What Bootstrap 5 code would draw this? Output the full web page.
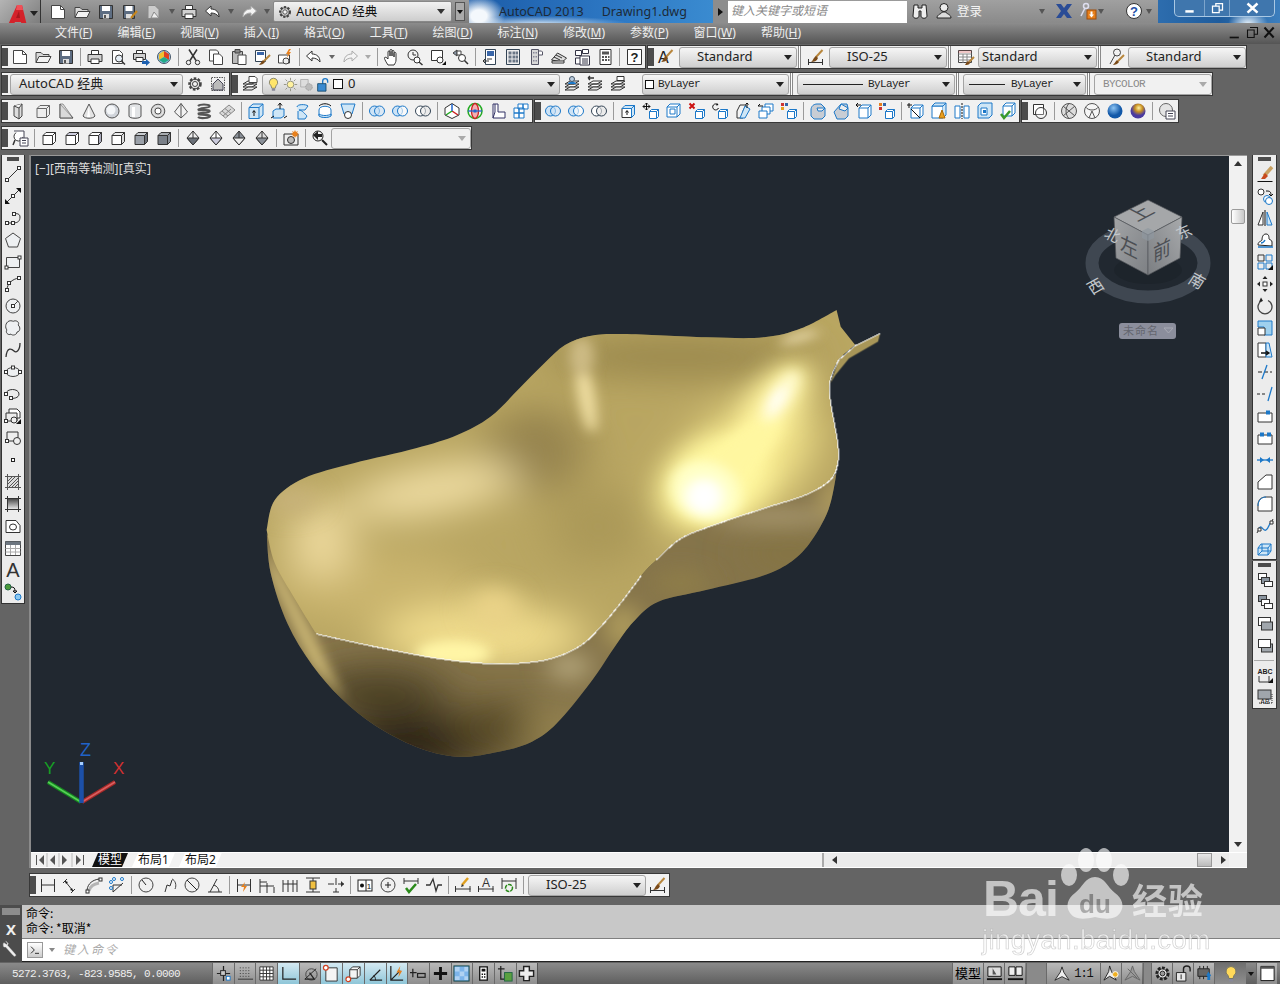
<!DOCTYPE html>
<html lang="zh">
<head>
<meta charset="UTF-8">
<title>AutoCAD 2013 Drawing1.dwg</title>
<link href="https://cdn.jsdelivr.net/npm/bootstrap@5.3.0/dist/css/bootstrap.min.css" rel="stylesheet">
<style>
  html, body { margin: 0; height: 100%; background: #646464; }
  #acad { width: 1280px; height: 984px; overflow: hidden; background: #646464; color: #111;
    font: 12px/1.2 "Noto Sans", "Noto Sans CJK SC", sans-serif; }
  .ico { display: block; overflow: visible; }
  /* title bar */
  .titlebar { height: 23px; background: linear-gradient(#9b9b9b, #7d7d7d); padding-left: 46px; }
  .titlebar > * { flex: none; }
  .tcell { width: 24px; height: 23px; }
  .tarrow { width: 12px; height: 23px; }
  .tarrow.nar { width: 11px; }
  .tarrow::after, .cmb::after, .menuarrow::after { content: ""; border: 4px solid transparent; border-top: 5px solid #222; border-bottom: 0; }
  .tarrow.dim::after { border-top-color: #555; border-left-width: 3px; border-right-width: 3px; }
  .tcombo { width: 179px; height: 21px; margin: 0 3px 0 0; background: linear-gradient(#f2f2f2, #cdcdcd); border: 1px solid #888; border-radius: 2px; padding: 0 6px 0 3px; font-size: 12.5px; }
  .tcombo::after { content: ""; margin-left: auto; border: 4px solid transparent; border-top: 5px solid #333; border-bottom: 0; }
  .tmore { width: 10px; height: 19px; background: #aaa; border: 1px solid #555; margin-right: 4px; }
  .tmore::after { content: ""; border: 3px solid transparent; border-top: 4px solid #111; border-bottom: 0; }
  .aero { width: 244px; height: 23px; color: #1c2a38; font-size: 12.5px; padding-left: 30px; gap: 18px;
    background: radial-gradient(ellipse 26px 20px at 10px 16px, #f4f8fc 30%, transparent 100%), radial-gradient(ellipse 90px 8px at 70px 24px, #cfe2f4, transparent), linear-gradient(90deg, #1c5ca8, #2d78c4 60%, #3a8bd0); }
  .tplay { width: 15px; height: 23px; background: #8d8d8d; }
  .tplay::after { content: ""; border: 4px solid transparent; border-left: 5px solid #111; border-right: 0; }
  .search { width: 179px; height: 22px; background: #fff; color: #888; font-style: italic; padding-left: 3px; }
  .infobar { width: 251px; height: 23px; background: linear-gradient(#a0a0a0, #8a8a8a); color: #f4f4f4; position: relative; }
  .infobar > * { position: absolute; top: 2px; }
  .infobar .inf3 { top: 4px; font-size: 12.5px; }
  .winbg { width: 123px; height: 23px; background: radial-gradient(ellipse 20px 14px at 90px 24px, #e8f2fa, transparent), linear-gradient(90deg, #2d6dae, #1f5c9c 50%, #3d7fbe); padding: 0 6px 6px 16px; }
  .winbtns { width: 101px; height: 17px; border: 1px solid #a9c8e4; border-top: 0; border-radius: 0 0 5px 5px; background: #3f76ad; }
  .winbtns > div { border-right: 1px solid #7da5cc; height: 100%; }
  .w1 { width: 30px; } .w2 { width: 25px; } .w3 { flex: 1; border-right: 0 !important; }
  /* menu */
  .menubar { height: 21px; background: linear-gradient(#8c8c8c, #555); color: #eee; padding-left: 55px; gap: 25px; font-size: 12px; position: relative; }
  .menuctl { position: absolute; right: 3px; top: 2px; gap: 2px; }
  /* app button */
  .appbtn { position: absolute; left: 0; top: 0; width: 41px; height: 41px; background: linear-gradient(135deg, #b4b4b4, #6f6f6f); border: 1px solid #333; border-width: 0 1px 1px 0; }
  .appbtn .menuarrow { position: absolute; left: 30px; top: 18px; }
  /* toolbars */
  .tbrow { margin: 3px 0 0 1px; height: 24px; gap: 1px; }
  .tbrow:first-child { margin-top: 1px; }
  .tbwrap { height: 105px; }
  .tb { height: 24px; border: 1px solid #383838; background: #f1f1f1; }
  .grip { width: 6px; height: 100%; flex: none; margin-right: 0; background-color: #4d4d4d; background-image: radial-gradient(#bbb 35%, transparent 40%); background-size: 2px 2px; background-position: 1px 0; background-clip: content-box; padding: 2px 0; }
  .btnico { width: 23px; height: 22px; flex: none; }
  .drop { width: 13px; height: 22px; flex: none; }
  .drop::after { content: ""; border: 3px solid transparent; border-top: 4px solid #666; border-bottom: 0; }
  .drop.off::after { border-top-color: #aaa; }
  .sepv { width: 6px; height: 20px; flex: none; }
  .sepv::after { content: ""; width: 1px; height: 18px; background: #9a9a9a; }
  .dsep { width: 6px; height: 100%; flex: none; background: linear-gradient(90deg, transparent 1px, #8a8a8a 1px, #8a8a8a 2px, #fff 2px, #fff 3px, #8a8a8a 3px, #8a8a8a 4px, transparent 4px); }
  .cmb { height: 21px; flex: none; background: linear-gradient(#f6f6f6, #cfcfcf); border: 1px solid #a4a4a4; border-radius: 3px; padding: 0 6px 0 8px; position: relative; font-size: 13px; white-space: nowrap; color: #222; }
  .cmb::after { position: absolute; right: 4px; top: 7px; }
  .cmb.pad18 { padding-left: 17px; }
  .cmb.left { padding-left: 3px; }
  .cmb.left svg { margin-right: 1.5px; }
  .cmb.off { background: #f1f1f1; color: #8a8a8a; }
  .cmb.off::after { border-top-color: #aaa; }
  .cmb .slab { font: 11px "Liberation Mono", monospace; letter-spacing: -0.6px; }
  .cmb .lineline { width: 60px; height: 1px; background: #222; margin: 0 5px 0 -3px; }
  .cmb .lineshort { width: 36px; height: 1px; background: #222; margin: 0 6px 0 -3px; }
  .cmb .swatch { width: 9px; height: 9px; border: 1px solid #111; background: #fff; margin: 0 4px 0 -1px; }
  .cmb .swatchb { width: 10px; height: 10px; border: 1.5px solid #111; background: #fff; margin: 0 5px 0 1px; }
  /* middle area */
  .midarea { height: 713px; margin-top: 5px; }
  .leftcol { padding-left: 1px; border-right: 2px solid #8a8a8a; width: 31px; }
  .vtb { width: 24px; background: #ececec; border: 1px solid #333; border-top: 0; }
  .vgrip { height: 8px; background-color: #4d4d4d; background-image: radial-gradient(#bbb 35%, transparent 40%); background-size: 2px 2px; background-clip: content-box; padding: 2px 5px; }
  .vtb .btnico { width: 22px; height: 22px; }
  .vsep { height: 1px; width: 20px; background: #aaa; margin: 3px 1px; }
  .centercol { width: 1216px; }
  .canvasrow { height: 697px; border-top: 1px solid #999; }
  .canvasbox { width: 1198px; background: #212830; position: relative; overflow: hidden; }
  .vscroll { width: 18px; background: #f1f1f1; position: relative; }
  .sarrow-up, .sarrow-down { position: absolute; left: 5px; border: 4px solid transparent; }
  .sarrow-up { top: 5px; border-bottom: 5px solid #333; border-top: 0; }
  .sarrow-down { bottom: 5px; border-top: 5px solid #333; border-bottom: 0; }
  .vthumb { position: absolute; left: 2px; top: 53px; width: 14px; height: 15px; background: linear-gradient(90deg, #fff, #c8c8c8); border: 1px solid #9a9a9a; border-radius: 2px; }
  .viewlabel { position: absolute; left: 4px; top: 6px; color: #ddd; font-size: 12px; letter-spacing: .1px; }
  .surface { position: absolute; left: 219px; top: 144px; width: 650px; height: 470px; }
  .cubebox { position: absolute; left: 1029px; top: 4px; width: 180px; height: 190px; }
  .ucs { position: absolute; left: 0; top: 584px; width: 110px; height: 70px; }
  .tabstrip { height: 16px; background: #f1f1f1; border-top: 1px solid #fff; border-bottom: 1px solid #fff; width: 1216px; position: relative; font-size: 12px; }
  .navbtns { width: 60px; margin-left: 1px; height: 100%; flex: none; }
  .navbtns svg { display: block; }
  .sheet { height: 100%; padding: 0 6px; margin-right: 4px; color: #111; clip-path: polygon(6px 0, 100% 0, calc(100% - 6px) 100%, 0 100%); background: #fff; line-height: 1; }
  .sheet.on { background: #111; color: #fff; }
  .hscroll { position: absolute; left: 791px; top: 0; width: 407px; height: 100%; background: #ebebeb; border-left: 2px solid #aaa; }
  .harrow-l, .harrow-r { position: absolute; top: 3px; border: 4px solid transparent; }
  .harrow-l { left: 8px; border-right: 5px solid #333; border-left: 0; }
  .harrow-r { right: 3px; border-left: 5px solid #333; border-right: 0; }
  .hthumb { position: absolute; left: 373px; top: 0; width: 15px; height: 14px; background: linear-gradient(#e8e8e8, #bbb); border: 1px solid #999; }
  .rightcol { width: 33px; padding-left: 5px; }
  .vtb.rt { width: 25px; }
  .vtb.rt .btnico { width: 23px; }
  .vtb.rt + .vtb.rt { margin-top: 1px; }
  /* dimension toolbar */
  .dimrow { margin: 5px 0 0 29px; }
  /* command window */
  .cmdwin { margin-top: 8px; height: 57px; }
  .cmdside { width: 22px; background: #4c4c4c; position: relative; }
  .cmdgrip { height: 13px; background-color: #8c8c8c; background-image: radial-gradient(#ccc 40%, transparent 45%); background-size: 2px 2px; background-clip: content-box; padding: 3px 2px; }
  .cmdx { height: 22px; color: #eee; font-weight: 700; font-size: 15px; }
  .cmdmain { flex: 1; }
  .cmdhist { height: 33px; background: #c8c8c8; padding: 0 0 0 4px; font: 12px/15px "Noto Sans CJK SC", sans-serif; color: #000; }
  .cmdinput { height: 24px; background: #fff; border-top: 1px solid #808080; border-bottom: 1px solid #222; padding-left: 5px; color: #aaa; font-style: italic; }
  .cmdbtn { width: 16px; height: 16px; background: linear-gradient(#fff, #ccc); border: 1px solid #999; color: #333; }
  .hintdrop { width: 17px; height: 10px; }
  .hintdrop::after { content: ""; border: 3px solid transparent; border-top: 4px solid #888; border-bottom: 0; }
  .hint { letter-spacing: 2px; font-size: 12px; margin-left: 3px; }
  /* status bar */
  .statusbar { height: 21px; margin-top: 1px; background: linear-gradient(#8a8a8a, #5f5f5f); position: relative; }
  .coords { width: 212px; padding-left: 12px; font: 11px "Liberation Mono", monospace; letter-spacing: -.6px; color: #eee; flex: none; }
  .stbtn { width: 21.7px; height: 21px; flex: none; background: linear-gradient(#b9b9b9, #8e8e8e); border-left: 1px solid #6a6a6a; }
  .stbtn.act { background: linear-gradient(#d4e9f2, #8fc6d8); }
  .stend { width: 1px; height: 21px; background: #555; }
  .stright { margin-left: auto; margin-right: 3px; height: 21px; }
  .stright .stbtn { width: 21px; }
  .stscale { width: 54px; height: 21px; background: linear-gradient(#b9b9b9, #8e8e8e); border-left: 1px solid #6a6a6a; font: 12px "Liberation Mono", monospace; color: #111; letter-spacing: -1px; }
  .stmodel { width: 31px; height: 21px; background: linear-gradient(#b9b9b9, #8e8e8e); border-left: 1px solid #6a6a6a; font-size: 13px; color: #000; line-height: 1; }
  .stgap { width: 20px; height: 21px; background: #8a8a8a; margin: 0 0 0 1px; border-left: 1px solid #6a6a6a; }
  .stgap.nar { width: 8px; }
  .stbulb { width: 32px !important; background: linear-gradient(#6f6f6f, #8e8e8e); }
  .stdrop { width: 10px; height: 21px; }
  .stdrop::after { content: ""; border: 3px solid transparent; border-top: 4px solid #111; border-bottom: 0; }
  /* watermark */
  .wmark { position: absolute; left: 980px; top: 845px; width: 240px; height: 114px; opacity: .62; color: #fff; pointer-events: none; }
  .wmark .bai { position: absolute; left: 3px; top: 29px; font: 700 50px/1 "Liberation Sans", sans-serif; letter-spacing: -1px; }
  .wmark .jing { position: absolute; left: 152px; top: 36px; font: 700 35px/1 "Noto Sans CJK SC", sans-serif; letter-spacing: 1px; }
  .wmark .paw { position: absolute; left: 80px; top: 2px; }
  .wmark .jyurl { position: absolute; left: 2px; top: 81px; font: 27.5px/1 "Liberation Sans", sans-serif; letter-spacing: .4px; -webkit-text-stroke: .7px #b4b4b4; }
</style>
</head>
<body>
<div id="acad" class="position-relative">

  <div class="titlebar d-flex align-items-center" id="titlebar"></div>
  <div class="appbtn">
    <svg width="32" height="40" viewBox="0 0 32 40">
      <path fill="#d4222a" d="M3 36 17 5h5l6 25-6-2-1-6h-6l-6 12z"/>
      <path fill="#7e0f14" d="M3 36l6 2 6-12-2-1zM22 28l6 2 0 3-6-2z"/>
      <path fill="#f05058" d="M17 5h5l1 5h-7z"/>
      <path fill="#a9161c" d="M16 18l3-7 1 7z"/>
    </svg>
    <span class="menuarrow d-block"></span>
  </div>

  <nav class="menubar d-flex align-items-center" id="menubar"></nav>

  <div class="tbwrap" id="toolbars"></div>

  <div class="midarea d-flex">
    <div class="leftcol"><div class="vtb" id="tbLeft"></div></div>
    <div class="centercol">
      <div class="canvasrow d-flex">
        <div class="canvasbox">
          <div class="viewlabel">[−][西南等轴测][真实]</div>

          <svg class="surface" viewBox="0 0 1568 1410" preserveAspectRatio="none">
            <defs>
              <filter id="wide" filterUnits="userSpaceOnUse" x="-200" y="-200" width="2000" height="1800"><feGaussianBlur stdDeviation="55"/></filter>
              <filter id="soft" filterUnits="userSpaceOnUse" x="-200" y="-200" width="2000" height="1800"><feGaussianBlur stdDeviation="32"/></filter>
              <filter id="mid" filterUnits="userSpaceOnUse" x="-200" y="-200" width="2000" height="1800"><feGaussianBlur stdDeviation="16"/></filter>
              <clipPath id="clipInner"><path id="pInner"/></clipPath>
              <clipPath id="clipShell"><path id="pShell"/></clipPath>
            </defs>
            <g clip-path="url(#clipShell)">
              <rect width="1568" height="1410" fill="#85744a"/>
              <g filter="url(#wide)">
                <ellipse cx="410" cy="1330" rx="190" ry="90" fill="#2c2312"/>
                <ellipse cx="310" cy="1180" rx="170" ry="80" fill="#4e4226"/>
                <ellipse cx="600" cy="1280" rx="120" ry="80" fill="#564a28"/>
                <ellipse cx="1300" cy="760" rx="110" ry="40" fill="#85743f"/>
                <ellipse cx="730" cy="1290" rx="60" ry="60" fill="#a08e55"/>
              </g>
              <g filter="url(#soft)">
                <ellipse cx="770" cy="1100" rx="50" ry="45" fill="#b4a57a"/>
                <ellipse cx="1260" cy="650" rx="150" ry="28" fill="#a99970"/>
                <ellipse cx="1410" cy="590" rx="26" ry="70" fill="#c2ad68"/>
                <ellipse cx="1040" cy="850" rx="70" ry="40" fill="#8f7e4a"/>
                <ellipse cx="900" cy="980" rx="40" ry="70" fill="#b3a05e"/>
              </g>
              <g filter="url(#mid)">
                <path d="M40 730 150 1000 230 1210 150 1095 50 830z" fill="#d2bd78"/>
              </g>
            </g>
            <path id="pInner2" fill="#b9a662"/>
            <g clip-path="url(#clipInner)">
              <g filter="url(#wide)">
                <ellipse cx="1030" cy="170" rx="330" ry="60" fill="#98864c"/>
                <ellipse cx="690" cy="450" rx="120" ry="130" fill="#95834d"/>
                <ellipse cx="840" cy="680" rx="120" ry="120" fill="#ab9959"/>
                <ellipse cx="300" cy="860" rx="250" ry="110" fill="#c9b46d"/>
                <ellipse cx="440" cy="570" rx="210" ry="70" fill="#efdda3" transform="rotate(-14 440 570)"/>
                <ellipse cx="170" cy="720" rx="70" ry="120" fill="#f2dea2"/>
                <ellipse cx="560" cy="1010" rx="250" ry="100" fill="#f0dc8c"/>
                <ellipse cx="1180" cy="500" rx="130" ry="240" fill="#f9eb90" transform="rotate(36 1180 500)"/>
              </g>
              <g filter="url(#soft)">
                <ellipse cx="100" cy="600" rx="60" ry="40" fill="#c8b27c"/>
                <ellipse cx="590" cy="930" rx="60" ry="70" fill="#ead388"/>
                <ellipse cx="1120" cy="540" rx="110" ry="140" fill="#fff8a0" transform="rotate(38 1120 540)"/>
                <ellipse cx="1270" cy="300" rx="60" ry="130" fill="#fff4a0" transform="rotate(28 1270 300)"/>
              </g>
              <g filter="url(#mid)">
                <ellipse cx="810" cy="280" rx="20" ry="120" fill="#f1e0a4" transform="rotate(-8 810 280)"/>
                <ellipse cx="800" cy="170" rx="30" ry="60" fill="#cdbb85"/>
                <ellipse cx="1325" cy="112" rx="50" ry="12" fill="#ebdcae" transform="rotate(-20 1325 112)"/>
                <ellipse cx="1170" cy="480" rx="55" ry="170" fill="#fff7a0" transform="rotate(38 1170 480)"/>
                <ellipse cx="1100" cy="575" rx="80" ry="95" fill="#ffffc8" transform="rotate(-30 1100 575)"/>
                <ellipse cx="1280" cy="290" rx="26" ry="85" fill="#fffbd0" transform="rotate(26 1280 290)"/>
                <ellipse cx="490" cy="1060" rx="90" ry="40" fill="#fff5a6"/>
                <ellipse cx="1095" cy="590" rx="44" ry="52" fill="#ffffff"/>
                <ellipse cx="1270" cy="300" rx="14" ry="42" fill="#ffffff" transform="rotate(26 1270 300)"/>
              </g>
            </g>
            <path id="pFlap" fill="#a89658"/>
            <path id="pRim1" fill="none" stroke="#fff" stroke-width="1" shape-rendering="crispEdges" vector-effect="non-scaling-stroke"/>
            <path id="pRim2" fill="none" stroke="#fff" stroke-width="1" shape-rendering="crispEdges" vector-effect="non-scaling-stroke"/>
          </svg>

          <svg class="cubebox" viewBox="1060 160 180 190">
            <defs>
              <linearGradient id="cubeL" x1="0" x2="1" y1="0" y2="1"><stop offset="0" stop-color="#a2a4a6"/><stop offset="1" stop-color="#7d8084"/></linearGradient>
              <linearGradient id="cubeR" x1="1" x2="0" y1="0" y2="1"><stop offset="0" stop-color="#a8aaac"/><stop offset="1" stop-color="#7b7e82"/></linearGradient>
            </defs>
            <ellipse cx="1148" cy="263" rx="56" ry="34" fill="none" stroke="#3f4751" stroke-width="13"/>
            <ellipse cx="1148" cy="270" rx="34" ry="14" fill="#1a1f26" opacity=".5"/>
            <path fill="#a5a7a9" stroke="#55585c" stroke-width=".7" d="M1148 200l34 17-34 18-34-18z"/>
            <path fill="url(#cubeL)" stroke="#55585c" stroke-width=".7" d="M1114 217l34 18v40l-32-17z"/>
            <path fill="url(#cubeR)" stroke="#55585c" stroke-width=".7" d="M1182 217l-34 18v40l32-17z"/>
            <path fill="#8f979f" d="M1148 228l6 3v7l-6 3-6-3v-7z" opacity=".7"/>
            <g font-family="Noto Sans CJK SC" fill="#4c4f54">
              <text font-size="20" transform="matrix(.95 -.5 .95 .5 1137 222)" text-anchor="start">上</text>
              <text font-size="21" transform="matrix(.85 .42 0 1 1120 250)">左</text>
              <text font-size="21" transform="matrix(.85 -.42 0 1 1153 262)">前</text>
            </g>
            <g font-family="Noto Sans CJK SC" fill="#c4c8cc" font-size="15">
              <text transform="matrix(.9 .4 -.5 .9 1103 237)">北</text>
              <text transform="matrix(.9 -.4 .5 .9 1180 240)">东</text>
              <text transform="matrix(.9 -.5 .6 .9 1092 295)">西</text>
              <text transform="matrix(.9 .5 -.6 .9 1187 282)">南</text>
            </g>
            <rect x="1119" y="323" width="57" height="16" rx="3" fill="#8b8e9c"/>
            <text x="1123" y="335" font-family="Noto Sans CJK SC" font-size="11" fill="#64666f" letter-spacing="1">未命名</text>
            <path d="M1164 328h9l-4.500 5z" fill="none" stroke="#a8aab4"/>
          </svg>

          <svg class="ucs" viewBox="0 0 110 70">
            <text x="49" y="16" font-family="Liberation Sans" font-size="18" fill="#2063c8">Z</text>
            <text x="13" y="34" font-family="Liberation Sans" font-size="17" fill="#16a024">Y</text>
            <text x="82" y="34" font-family="Liberation Sans" font-size="17" fill="#d23030">X</text>
            <path d="M50 62 17 42" stroke="#168a20" stroke-width="4"/>
            <path d="M50 62 17 42" stroke="#58d058" stroke-width="1.500"/>
            <path d="M51 62 84 42" stroke="#a82828" stroke-width="4"/>
            <path d="M51 62 84 42" stroke="#d86060" stroke-width="1.500"/>
            <path d="M50.500 63V22" stroke="#1c50a8" stroke-width="4.500"/>
            <rect x="49" y="22" width="3" height="3" fill="#a8d0ff"/>
          </svg>
        </div>
        <div class="vscroll"><span class="sarrow-up"></span><span class="vthumb"></span><span class="sarrow-down"></span></div>
      </div>
      <div class="tabstrip d-flex align-items-center">
        <div class="navbtns d-flex align-items-center">
          <svg width="58" height="14" viewBox="0 0 58 14"><g fill="#555"><path d="M4 2h1v10H4zM12 2v10L7 7z"/><path d="M23 2v10l-5-5zM30 2v10l5-5z"/><path d="M44 2v10l5-5zM51 2h1v10h-1z"/></g><path stroke="#bbb" d="M15 0v14M27 0v14M40 0v14"/></svg>
        </div>
        <div class="sheet on d-flex align-items-center">模型</div>
        <div class="sheet d-flex align-items-center">布局1</div>
        <div class="sheet d-flex align-items-center">布局2</div>
        <div class="hscroll"><span class="harrow-l"></span><span class="hthumb"></span><span class="harrow-r"></span></div>
      </div>
    </div>
    <div class="rightcol">
      <div class="vtb rt" id="tbRight1"></div>
      <div class="vtb rt" id="tbRight2"></div>
    </div>
  </div>

  <div class="dimrow d-flex"><div class="tb d-flex align-items-center" id="tbDim"></div></div>

  <div class="cmdwin d-flex">
    <div class="cmdside">
      <div class="cmdgrip"></div>
      <div class="cmdx d-flex align-items-center justify-content-center">X</div>
      <div class="d-flex justify-content-center" id="wrench"></div>
    </div>
    <div class="cmdmain">
      <div class="cmdhist">命令:<br>命令: *取消*</div>
      <div class="cmdinput d-flex align-items-center">
        <span class="cmdbtn d-flex align-items-center justify-content-center" id="promptIco"></span>
        <span class="hintdrop d-flex justify-content-center align-items-center"></span>
        <span class="hint">键入命令</span>
      </div>
    </div>
  </div>

  <div class="statusbar d-flex align-items-center" id="status"></div>

  <div class="wmark">
    <span class="bai">Bai</span>
    <svg class="paw" width="70" height="74" viewBox="0 0 70 74">
      <ellipse cx="26" cy="13" rx="8" ry="12" fill="#fff"/><ellipse cx="44" cy="13" rx="8" ry="12" fill="#fff"/>
      <ellipse cx="9" cy="28" rx="8" ry="11" fill="#fff"/><ellipse cx="61" cy="28" rx="8" ry="11" fill="#fff"/>
      <path fill="#fff" d="M35 30c-10 0-12 10-20 16-7 5-10 13-5 20 4 6 12 7 25 4 13 3 21 2 25-4 5-7 2-15-5-20-8-6-10-16-20-16z"/>
      <text x="35" y="66" text-anchor="middle" font-family="Liberation Sans" font-weight="700" font-size="26" fill="#999">du</text>
    </svg>
    <span class="jing">经验</span>
    <span class="jyurl">jingyan.baidu.com</span>
  </div>
</div>

<script>
  const blue = '#1c78c8', dk = '#333', or = '#e8801c';

  // small drawing helpers, everything sits on an 18x18 box
  const boxL = (f = '#fff', c = dk) => `<path fill="${f}" stroke="${c}" d="M3 6.500l3-3h9.500v9l-3 3H3z"/><path stroke="${c}" d="M3 6.500h9.500v9M12.500 6.500l3-3"/>`;
  const mini = (x = '') => `<path fill="#fff" stroke="${blue}" d="M7.500 9.500l2-2h7v7l-2 2h-7z M7.500 9.500h7v7M14.500 9.500l2-2"/>` + x;
  const rings = (a, b) => `<circle cx="6.500" cy="9" r="5" stroke="${blue}" fill="${a}"/><circle cx="11.500" cy="9" r="5" stroke="${blue}" fill="${b}" fill-opacity=".6"/>`;
  const dim = (x = '') => `<path stroke="${dk}" d="M2.500 3v13M15.500 3v13M2.500 9h13"/>` + x;
  const pt = (x, y) => `<rect x="${x - 1.500}" y="${y - 1.500}" width="3" height="3" fill="#fff" stroke="${dk}"/>`;
  const view = (a, b, c) => `<path fill="${a}" stroke="${dk}" d="M3 6.500h9.500v9H3z"/><path fill="${b}" stroke="${dk}" d="M3 6.500l3-3h9.500l-3 3z"/><path fill="${c}" stroke="${dk}" d="M12.500 6.500l3-3v9l-3 3z"/>`;
  const dia = (a, b) => `<path fill="${a}" stroke="${dk}" d="M9 2l6 7-6 7-6-7z"/><path fill="${b}" stroke="${dk}" d="M9 9l6 0-6 7-6-7zM9 2v7"/>`;
  const stack = (f) => `<rect x="2.500" y="2.500" width="8" height="6" fill="#fff" stroke="${dk}"/><rect x="5.500" y="6.500" width="8" height="6" fill="${f}" stroke="${dk}"/><rect x="8.500" y="10.500" width="8" height="5" fill="#fff" stroke="${dk}"/>`;
  const layers = `<path fill="#fff" stroke="${dk}" d="M2 12l5-3h9l-5 3zM2 9l5-3h9l-5 3z"/><path fill="#e8e8e8" stroke="${dk}" d="M2 15l5-3h9l-5 3z"/>`;
  const bulb = (c) => `<path fill="${c}" stroke="#776" d="M9 1.500a5 5 0 0 1 3 9l-1 3H7l-1-3a5 5 0 0 1 3-9z"/><path fill="#889" d="M7 14h4v2.500H7z"/>`;
  const brush = `<path stroke="#b8863c" stroke-width="2" d="M15.500 2 9 9"/><path fill="#7a4a18" d="M9 8l2 2c-1 3-4 4-7 4 2-1 2-4 5-6z"/>`;

  const S = {
    new: '<path fill="#fff" stroke="#444" d="M2.500 2.500h9l4 4v9h-13z"/><path stroke="#444" d="M11.500 2.500v4h4"/>',
    open: '<path fill="#d8d8d8" stroke="#444" d="M2 14.500v-10h5l2 2h6v2"/><path fill="#f2f2f2" stroke="#444" d="M2 14.500l3-6h12l-3 6z"/>',
    save: '<path fill="#5d6d82" stroke="#333" d="M2.500 2.500h13v13h-13z"/><path fill="#fff" d="M5 3h8v5H5z"/><path fill="#ddd" d="M6 11h6v4.500H6z"/><path fill="#555" d="M7 12h2v3H7z"/>',
    saveas: '<path fill="#5d6d82" stroke="#333" d="M2.500 2.500h11v13h-11z"/><path fill="#fff" d="M4.500 3h7v5h-7z"/><path fill="#ddd" d="M5 11h6v4.500H5z"/><path stroke="#c8871c" stroke-width="2" d="M16 8l-6 7"/>',
    pub: '<path fill="#ccc" stroke="#888" d="M3 2.500h7l4 4v9H3z"/><path fill="#eee" stroke="#888" d="M6 15l3-6 5 6z"/>',
    print: '<path fill="#fff" stroke="#333" d="M5.500 2.500h7v4h-7z"/><path fill="#d0d0d0" stroke="#333" d="M2 6.500h14v7H2z"/><path fill="#fff" stroke="#333" d="M5 11h8v4.500H5z"/>',
    prev: '<path fill="#fff" stroke="#444" d="M3.500 2.500h7l3 3v10h-10z"/><circle cx="10" cy="10.500" r="3.500" fill="#e6eef6" stroke="#333"/><path stroke="#333" stroke-width="1.500" d="M12.500 13l3.500 3.500"/>',
    plot: '<path fill="#fff" stroke="#333" d="M4.500 2.500h6v3h-6z"/><path fill="#d0d0d0" stroke="#333" d="M1.500 5.500h12v6h-12z"/><path fill="#fff" stroke="#333" d="M4 9.500h7v4H4z"/><path fill="#1c60b0" d="M10 13h4v-2l4 3.500-4 3.500v-2h-4z"/>',
    p3d: '<circle cx="9" cy="9" r="6.500" fill="#9cc4e8" stroke="#456"/><path fill="#e04020" d="M9 3l5 3v6l-5-3z"/><path fill="#f0c030" d="M4 6l5-3v6l-5 3z"/><path fill="#2a8" d="M4 12l5-3 5 3-5 3z"/>',
    cut: '<path stroke="#333" stroke-width="1.500" d="M5 1.500l7 11M13 1.500l-7 11"/><circle cx="4.500" cy="14.500" r="2.200" stroke="#333"/><circle cx="13.500" cy="14.500" r="2.200" stroke="#333"/>',
    copy: '<path fill="#fff" stroke="#444" d="M2.500 2h7l2 2v9h-9z"/><path fill="#fff" stroke="#444" d="M6.500 6h6l3 3v7.500h-9z"/>',
    paste: '<path fill="#bbb" stroke="#444" d="M2.500 3.500h10v12h-10z"/><path fill="#888" stroke="#444" d="M5 1.500h5v3.500H5z"/><path fill="#fff" stroke="#444" d="M8 7h8v9.500H8z"/>',
    match: `<path fill="#fff" stroke="#345" d="M2.500 2.500h10v11h-10z"/><path fill="#3a66a8" d="M4 4h7v3H4z"/>` + brush.replace('M15.500 2 9 9', 'M17 7l-6 6').replace('M9 8l2 2c-1 3-4 4-7 4 2-1 2-4 5-6z', 'M10 12l2 2c-1 2-4 3-6 3 1-1 2-3 4-5z'),
    blockedit: `<path fill="#fff" stroke="#444" d="M2.500 7h11v8h-11z"/><circle cx="10" cy="13" r="3" fill="#eee" stroke="#444"/><path fill="${or}" d="M13 1l-3 5h2l-1 4 4-6h-2l2-3z"/>`,
    undo: '<path fill="#fff" stroke="#333" d="M7 3 1.500 8 7 13v-3c3 0 6 1 8 4 0-5-3-8-8-8z"/>',
    redo: '<path fill="#f4f4f4" stroke="#aaa" d="M11 3l5.500 5L11 13v-3c-3 0-6 1-8 4 0-5 3-8 8-8z"/>',
    pan: '<path fill="#fff" stroke="#333" d="M5 17c-2-3-3-5-3.500-6.500S3 8.500 5 11V4c0-1.500 2-1.500 2 0v4V2.500c0-1.500 2-1.500 2 0V8 3.500c0-1.500 2-1.500 2 0V9 5.500c0-1.500 2-1.500 2 0V12c0 2-1 3.500-2 5z"/>',
    zoomr: `<circle cx="7" cy="7" r="5" fill="#f4f4f4" stroke="#333"/><path stroke="#333" d="M7 4v3h3"/><circle cx="11" cy="12" r="3" fill="#fff" stroke="#333"/><path stroke="#333" stroke-width="1.500" d="M13 14l3.500 3"/>`,
    zooms: `<path fill="#fff" stroke="#333" d="M2.500 2.500h11v10h-11z"/><circle cx="11" cy="12" r="3" fill="#fff" stroke="#333"/><path fill="#111" d="M17 13v4h-4z"/>`,
    zoomp: `<path fill="#8a98a8" stroke="#444" d="M1 5l4-3v6z"/><path fill="#fff" stroke="#444" d="M5 3h4v4H5z"/><circle cx="10" cy="10" r="3.500" fill="#fff" stroke="#333"/><path stroke="#333" stroke-width="1.500" d="M12.500 12.500l3.500 3.500"/>`,
    prop: `<path fill="#fff" stroke="#345" d="M4.500 1.500h10v15h-10z"/><path fill="#3a66a8" d="M6 3h7v5H6z"/><path stroke="#333" d="M6 11h5M2 13h6M2 13l2-2M2 13l2 2"/>`,
    dc: '<path fill="#eee" stroke="#345" d="M2.500 1.500h13v15h-13z"/><path fill="#6a7686" d="M4.500 3.500h3v3h-3zM8.500 3.500h3v3h-3zM12 3.500h2v3h-2zM4.500 7.500h3v3h-3zM8.500 7.500h3v3h-3zM12 7.500h2v3h-2zM4.500 11.500h3v3h-3zM8.500 11.500h3v3h-3zM12 11.500h2v3h-2z"/>',
    tools: '<path fill="#d8d8d8" stroke="#556" d="M4.500 1.500h7v15h-7z"/><path fill="#fff" stroke="#556" d="M11.500 3h3l1 1v3h-4z"/><path fill="#889" d="M6 4h1.500v1.500H6zM8.500 4H10v1.500H8.500zM6 8h1.500v1.500H6zM8.500 8H10v1.500H8.500zM6 12h1.500v1.500H6zM8.500 12H10v1.500H8.500z"/>',
    sheet: '<path fill="#ddd" stroke="#333" d="M1.500 12l6-7 9 5-4 4z"/><path stroke="#333" d="M4 9l6 3M6 7l6 3"/><path fill="#fff" stroke="#333" d="M2 13h12v2H2z"/>',
    mkp: '<path fill="#fff" stroke="#334" d="M2.500 2.500h6v5h-6zM9.500 1.500h6v4h-6zM2.500 10h6v6h-6z"/><path fill="#fff" stroke="#334" d="M7 8h9.500v9H7z"/><path stroke="#334" d="M9 11h6M9 13h6M9 15h6"/>',
    calc: '<path fill="#fff" stroke="#333" d="M4 1.500h11v15H4z"/><path fill="#555" d="M6 3.500h7v3H6zM6 8h2v2H6zM9 8h2v2H9zM12 8h1.500v2H12zM6 11h2v2H6zM9 11h2v2H9zM12 11h1.500v2H12z"/>',
    help: '<path fill="#fff" stroke="#333" d="M2.500 1.500h14v15h-14z"/><text x="9.500" y="14" font-size="13" font-weight="700" font-family="Liberation Sans" text-anchor="middle" fill="#222" stroke="none">?</text>',
    tstyle: `<text x="1" y="15" font-size="16" font-family="Liberation Sans" fill="#222" stroke="none">A</text>` + brush,
    dstyle: `<path stroke="${dk}" d="M1.500 11v6M15.500 11v6M1.500 14.500h14"/>` + brush,
    tbstyle: `<path fill="#fff" stroke="#444" d="M1.500 2.500h13v12h-13z"/><path stroke="#888" d="M1.500 6h13M1.500 9h13M1.500 12h13M6 6v9M10 6v9"/><path fill="#c44" d="M1.500 2.500h13V5h-13z" opacity=".3"/>` + brush.replace('M15.500 2 9 9', 'M17 9l-5 5').replace('M9 8l2 2c-1 3-4 4-7 4 2-1 2-4 5-6z', 'M11 13l2 2c-1 2-3 2-5 2 1-1 1-3 3-4z'),
    mlstyle: `<circle cx="10" cy="4.500" r="3.500" stroke="#444"/><path stroke="#444" d="M8 7 3 16"/>` + brush.replace('M15.500 2 9 9', 'M17 7l-6 6').replace('M9 8l2 2c-1 3-4 4-7 4 2-1 2-4 5-6z', 'M10 12l2 2c-1 2-4 3-6 3 1-1 2-3 4-5z'),
    gear: '<circle cx="9" cy="9" r="5.500" fill="#ddd" stroke="#444" stroke-width="2.500" stroke-dasharray="2.500 1.500"/><circle cx="9" cy="9" r="4.800" stroke="#444"/><circle cx="9" cy="9" r="2.500" stroke="#444" fill="#f4f4f4"/>',
    wsmax: '<path stroke="#555" stroke-dasharray="1.500 1" d="M2.500 2.500h13v13h-13z"/><path fill="#bbb" stroke="#445" d="M4 9l5-5 5 5v6H4z"/>',
    layerp: layers + `<path fill="#fff" stroke="#444" d="M8 1.500h6l2 2v4H8z"/>`,
    layerstate: layers + `<circle cx="9" cy="4" r="2.500" fill="#bcd" stroke="#456"/><path fill="${blue}" d="M5 9c0-3 8-3 8 0z"/>`,
    layerm: layers + `<path stroke="#333" stroke-width="1.300" d="M2 3h6M2 3l2-2M2 3l2 2"/>`,
    layers0: layers + `<path fill="#fff" stroke="${dk}" d="M8 1.500h7v4H8z"/>`,
    polysolid: '<path fill="#ddd" stroke="#444" d="M3 4l8-2v12l-3 3-5-3z"/><path fill="#f8f8f8" stroke="#444" d="M8 6v11M3 4l5 2 3-4"/>',
    box: boxL('#eee', '#666'),
    wedge: '<path fill="#f0f0f0" stroke="#555" d="M3 2v14h13z"/><path fill="#ccc" stroke="#555" d="M3 2l3 0 10 14H3z" opacity=".6"/>',
    cone: '<path fill="#e4e4e4" stroke="#555" d="M9 2 3 14c2 3 10 3 12 0z"/><path fill="#fff" d="M9 4l-2 11h3z"/>',
    sphere: '<circle cx="9" cy="9" r="7" fill="#d0d4da" stroke="#555"/><circle cx="8" cy="8" r="4.500" fill="#f4f6f8"/>',
    cyl: '<path fill="#e2e4e6" stroke="#555" d="M3 4c0-3 12-3 12 0v10c0 3-12 3-12 0z"/><path fill="#fff" d="M6 5h3v10H6z"/>',
    torus: '<circle cx="9" cy="9" r="6.800" fill="#ccc" stroke="#555"/><circle cx="9" cy="9" r="3" fill="#fff" stroke="#555"/><circle cx="9" cy="9" r="5" stroke="#eee"/>',
    pyr: '<path fill="#f2f2f2" stroke="#555" d="M9 1.500 2.500 10 9 16l6.500-6z"/><path stroke="#555" d="M9 1.500V16"/>',
    helix: '<path stroke="#555" stroke-width="2.200" d="M3 4c2-2 10-2 12 0M15 4c-2 3-10 1-12 4M3 8c2 1 10-1 12 1M15 9c-2 3-10 1-12 3M3 12c2 1 10 0 12 2 0 2-10 3-12 1"/>',
    planar: '<path fill="#d8d8d8" stroke="#888" d="M1.500 11 11 3l6 5-9.500 8z"/><path stroke="#888" d="M4 9l6 5M7 6.500l6 5M5 14l8-7"/>',
    extrude: `<path fill="#cfe6f6" stroke="${blue}" d="M2 5.500l4-3.500h10v11l-4 3.500H2z"/><path stroke="${blue}" d="M2 5.500h10v11M12 5.500l4-3.500"/><path stroke="#111" d="M7 14V9M5.500 10.500 7 8.500l1.500 2"/>`,
    press: `<path fill="#cfe6f6" stroke="${blue}" d="M3 9l3-2h8v7l-3 2H3z"/><path stroke="#111" d="M10 7V1.500M8 3.500l2-2.500 2 2.500M1 16l3-2M14 16l3-2"/>`,
    sweep: `<path fill="#cfe6f6" stroke="${blue}" d="M4 5c0-3 9-3 11-1l-3 4H6c3 0 6 4 8 6l-2 3H5V9"/>`,
    revolve: `<path stroke="${blue}" fill="#fff" d="M3 8c0-5 12-5 12 0v5c0 3-12 3-12 0z"/><path fill="#cfe6f6" stroke="${blue}" d="M3 12c3 2 9 2 12 0v2c-3 2-9 2-12 0z"/><path stroke="#111" d="M3 4c3-3 9-3 12 0"/>`,
    loft: `<path fill="#cfe6f6" stroke="${blue}" d="M2 2h14l-3 10H5z"/><circle cx="9" cy="13" r="3.500" fill="#fff" stroke="#333"/>`,
    union: rings('#cde3f6', '#cde3f6'),
    subtract: rings('#cde3f6', '#fff'),
    intersect: rings('#fff', '#e8e8e8').replaceAll(blue, '#345'),
    gizmo: `<path fill="#fff" stroke="#333" d="M9 1.500 16 6v7l-7 3.500L2 13V6z"/><path stroke="#c22" stroke-width="1.500" d="M9 9l6 4"/><path stroke="#2a2" stroke-width="1.500" d="M9 9l-6 4"/><path stroke="#26c" stroke-width="1.500" d="M9 9V2"/>`,
    orbit: `<ellipse cx="9" cy="9" rx="7" ry="7.500" stroke="#2a2" stroke-width="1.500"/><ellipse cx="9" cy="9" rx="3.500" ry="7.500" fill="#f4b0b0" stroke="#c22" stroke-width="1.300"/><path stroke="#26c" stroke-width="1.300" d="M2 9h14"/><rect x="7.500" y="7.500" width="3" height="3" fill="#26c"/>`,
    align3: `<path fill="#fff" stroke="#336" d="M4 2h5v8h7v6H4z"/><path stroke="#336" d="M6 2v8l-2 6"/>`,
    array3: `<g fill="#fff" stroke="${blue}"><path d="M6 2h5v5H6zM11 2h5v5h-5zM2 6h5v5H2zM7 6h5v5H7zM2 11h5v5H2zM7 11h5v5H7z"/></g>`,
    fext: `<path fill="#fff" stroke="#333" d="M3 6.500h9.500v9H3z"/><path fill="#cfe6f6" stroke="${blue}" d="M3 6.500l3-3h9.500l-3 3zM12.500 6.500l3-3v9l-3 3z"/><path stroke="#111" d="M8 13V9M6.500 10.500 8 8.500l1.500 2"/>`,
    fmove: mini(`<path stroke="#111" d="M4.500 1v7M1 4.500h7M4.500 1 3 2.500M4.500 1 6 2.500M1 4.500 2.500 3M1 4.500 2.500 6M8 4.500 6.500 3M8 4.500 6.500 6M4.500 8 3 6.500M4.500 8 6 6.500"/>`),
    foff: `<path fill="#fff" stroke="${blue}" d="M2 5l3-3h10v10l-3 3H2z M2 5h10v10M12 5l3-3"/><path fill="#fff" stroke="${blue}" d="M5 7h5v5H5z"/>`,
    fdel: mini(`<path stroke="#c11" stroke-width="2" d="M1.500 1.500l5 5M6.500 1.500l-5 5"/>`),
    frot: mini(`<path stroke="#111" d="M7 3a3 3 0 1 0 .5 3"/><path d="M6 1l1.500 2L5 3.500z" fill="#111"/>`),
    ftap: `<path fill="#f4f4f4" stroke="#333" d="M3 9l3-6h6l-3 6v7H3z"/><path fill="#cfe6f6" stroke="${blue}" d="M6 16 11 4l5 3-5 9z"/><path stroke="#111" d="M13 6V1M11.500 2.500 13 1l1.500 1.500"/>`,
    fcopy: `<g fill="#fff" stroke="${blue}"><path d="M8 2h8v7H8z"/><path d="M5 5h8v7H5z"/><path d="M2 9h8v7H2z"/></g><path stroke="#111" d="M1 4h5M1 4l2-2"/>`,
    fcolor: mini(`<path fill="#c33" d="M1 1h3v3H1z"/><path fill="#36a" d="M5 1h3v3H5z"/><path fill="#e8a020" d="M1 5h3v3H1z"/>`),
    eround: `<path fill="#c8cdd4" stroke="${blue}" d="M2 8c0-4 3-6 6-6h4l4 4v8l-3 3H5l-3-3z"/><path fill="#eee" stroke="${blue}" d="M8 6h8l-3 3H9z"/>`,
    echam: `<path fill="#c8cdd4" stroke="${blue}" d="M2 10 9 2h6l1 4v8l-3 3H5z"/><path fill="#eee" stroke="${blue}" d="M9 2l7 4-3 3-6-2z"/>`,
    ecopy: `<path fill="#fff" stroke="${blue}" d="M4 6h9v10H4zM4 6l3-3h9v10l-3 3M13 6l3-3"/><path stroke="#111" d="M1 3h5M1 3l2-2M1 3l2 2"/>`,
    ecolor: mini(`<path fill="#e8801c" d="M1 1h3v3H1z"/><path fill="#36a" d="M5 1h3v3H5z"/><path fill="#c33" d="M1 5h3v3H1z"/>`),
    imprint: `<path fill="#fff" stroke="${blue}" d="M4 6l3-3h9v10l-3 3H4z M4 6h9v10M13 6l3-3"/><path stroke="#111" d="M4 7l9 9M2 1v5M0 3h5"/>`,
    clean: `<path fill="#fff" stroke="${blue}" d="M2 4h11v12H2z"/><path fill="#cfe6f6" stroke="${blue}" d="M2 4l3-3h11l-3 3zM13 4l3-3v12l-3 3"/><path fill="#e8a020" stroke="#a60" d="M9 16l3-8 3 8z"/>`,
    sep3: `<path fill="#fff" stroke="${blue}" d="M2 4h5v12H2zM11 4h5v12h-5z"/><path stroke="#111" stroke-dasharray="2 1" d="M9 1v16"/>`,
    shell: `<path fill="#cfe6f6" stroke="${blue}" d="M2 4l3-3h11v12l-3 3H2z"/><path fill="#fff" stroke="${blue}" d="M5 6h6v7H5z"/><path fill="${blue}" d="M7 8h3v3H7z"/>`,
    check3: `<path fill="#fff" stroke="${blue}" d="M4 4l3-3h9v10l-3 3H4z M4 4h9v10M13 4l3-3"/><path stroke="#3a9a2a" stroke-width="2.500" d="M2 12l3 4 6-7"/>`,
    slice: '<path fill="#fff" stroke="#333" d="M2.500 2.500h10v10h-10z"/><circle cx="10" cy="11" r="5.500" fill="#fff" fill-opacity=".3" stroke="#333"/>',
    hide: '<circle cx="9" cy="9" r="7.500" fill="#ddd" stroke="#555"/><path stroke="#555" d="M3 4l12 10M15 4 3 14M9 1.500c-4 4-4 11 0 15"/>',
    hide2: '<circle cx="9" cy="9" r="7.500" fill="#f6f6f6" stroke="#555"/><path stroke="#555" d="M2.500 5c3 4 10 4 13 0M9 9l-3 7M9 9l3 7"/>',
    ballB: '<defs><radialGradient id="bb" cx=".4" cy=".3"><stop offset="0" stop-color="#8cc4f4"/><stop offset="1" stop-color="#1258a8"/></radialGradient></defs><circle cx="9" cy="9" r="7.500" fill="url(#bb)" stroke="none"/>',
    ballG: '<defs><radialGradient id="bg" cx=".55" cy=".3"><stop offset="0" stop-color="#fff0a0"/><stop offset=".5" stop-color="#c89020"/><stop offset="1" stop-color="#4a3aa0"/></radialGradient></defs><circle cx="9" cy="9" r="7.500" fill="url(#bg)" stroke="none"/>',
    vsm: '<circle cx="8" cy="8" r="6.500" fill="#e4e4e4" stroke="#666"/><path fill="#fff" stroke="#445" d="M8 9h9v8H8z"/><path stroke="#445" d="M10 11.500h5M10 14h5"/>',
    vmgr: '<circle cx="7.500" cy="7.500" r="4.500" fill="#fff" stroke="#333"/><path stroke="#333" stroke-width="1.500" d="M4 11l-2 5"/><path fill="#fff" stroke="#445" d="M3 2h10v7"/><path fill="#fff" stroke="#445" d="M9 9h8v8H9z"/><path stroke="#445" d="M11 11.500h4M11 14h4"/>',
    vcam: `<path fill="#eee" stroke="#333" d="M2 5h14v11H2z"/><circle cx="9" cy="11" r="3.500" fill="#bbb" stroke="#333"/><path fill="${or}" d="M13 1l1 2 2-1-1 2 2 1-2 1 1 2-2-1-1 2-1-2-2 1 1-2-2-1 2-1-1-2 2 1z"/>`,
    vback: '<circle cx="7" cy="7" r="5" fill="#f4f4f4" stroke="#222"/><path fill="#222" d="M2 6l5-4v3h4v3H7v3z"/><path stroke="#222" stroke-width="2" d="M11 11l5 5"/>',
    vw1: view('#fff', '#fff', '#fff'), vw2: view('#fff', '#ccd', '#fff'), vw3: view('#fff', '#fff', '#aab'),
    vw4: view('#fff', '#eee', '#ddd'), vw5: view('#9aa0a8', '#c8ccd0', '#6a7078'), vw6: view('#7a8088', '#a8acb0', '#8a9098'),
    iso1: dia('#eee', '#6a7078'), iso2: dia('#fff', '#ccd'), iso3: dia('#8a9098', '#eee'), iso4: dia('#ddd', '#8a9098'),
    line: `<path stroke="${dk}" d="M3 15 15 3"/>` + pt(3, 15) + pt(15, 3),
    xline: `<path stroke="${dk}" d="M2 16 16 2"/><path fill="#111" d="M1 17v-5l5 5zM17 1v5l-5-5z"/>` + pt(9, 9),
    pline: `<path stroke="${dk}" d="M3 14h6M9 14c5 0 7-2 7-6 0-3-3-4-6-3"/>` + pt(3, 14) + pt(9, 14) + pt(10, 5),
    polygon: '<path fill="#eef0f2" stroke="#444" d="M9 2l7.500 5.500-3 8.500h-9l-3-8.500z"/>',
    rect: '<path fill="#eef0f2" stroke="#444" d="M2.500 4.500h13v10h-13z"/>' + pt(2.500, 14.500) + pt(15.500, 4.500),
    arc: `<path stroke="${dk}" d="M3 15c0-6 5-11 12-12"/>` + pt(3, 15) + pt(5, 8) + pt(15, 3),
    circle: `<circle cx="9" cy="9" r="7" fill="#eef0f2" stroke="#444"/><path stroke="#444" d="M9 9l5-5"/>` + pt(9, 9),
    cloud: '<path fill="#eef0f2" stroke="#444" d="M5 2c3-1 4 1 5 0 3-1 6 2 4 4 3 2 2 7-1 7 0 3-5 4-6 2-3 2-6-2-4-4-2-2-2-7 2-9z"/>',
    spline: `<path stroke="${dk}" stroke-width="1.300" d="M2 16C3 5 8 8 10 10s6 0 6-8"/>`,
    ellipse: `<ellipse cx="9" cy="9" rx="7" ry="4.500" fill="#eef0f2" stroke="#444"/>` + pt(2, 9) + pt(16, 9) + pt(9, 4.500),
    ellarc: `<path stroke="${dk}" d="M2 9c0-6 13-6 13 0 0 4-6 5-9 4"/>` + pt(2, 9) + pt(7, 13),
    insert: `<path fill="#fff" stroke="#333" d="M5 2h8l3 3v6H5z"/><path fill="#eee" stroke="#333" d="M2 6h11v8H2z"/><circle cx="10" cy="13" r="3" fill="#eee" stroke="#333"/><path fill="#111" d="M17 12v5h-5z"/>` + pt(2, 14),
    mkblock: `<path fill="#eee" stroke="#333" d="M3 3h11v9H3z"/><circle cx="13" cy="12" r="3.500" fill="#eee" stroke="#333"/>` + pt(3, 12),
    point: '<rect x="7.500" y="7.500" width="3" height="3" fill="#fff" stroke="#222"/>',
    hatch: '<path fill="#ddd" stroke="#333" d="M3.500 3.500h11v11h-11z"/><path stroke="#555" d="M4 8l4-4M4 11l7-7M5 14l9-9M8 14l6-6M11 14l3-3M1 3.500h16M1 14.500h16M3.500 1v16M14.500 1v16"/>',
    gradient: '<defs><linearGradient id="gr" x1="0" x2="0" y1="0" y2="1"><stop offset="0" stop-color="#444"/><stop offset="1" stop-color="#eee"/></linearGradient></defs><path fill="url(#gr)" stroke="#333" d="M3.500 3.500h11v11h-11z"/><path stroke="#333" d="M1 3.500h16M1 14.500h16M3.500 1v16M14.500 1v16"/>',
    region: '<path fill="#fff" stroke="#333" d="M2 3.500h10l4 5v7H2z"/><ellipse cx="9" cy="10" rx="3.500" ry="3" stroke="#333"/>',
    table: '<path fill="#fff" stroke="#444" d="M1.500 2.500h15v14h-15z"/><path fill="#6d7680" d="M1.500 2.500h15V6h-15z"/><path stroke="#aaa" d="M1.500 9.500h15M1.500 13h15M6.500 6v10M11.500 6v10"/>',
    mtext: '<text x="9" y="16" font-size="20" font-family="Liberation Sans" text-anchor="middle" fill="#333" stroke="none">A</text>',
    addsel: `<circle cx="4" cy="4" r="3" fill="#4a9a3a" stroke="#264"/><circle cx="14" cy="14" r="3" fill="#8cc8f0" stroke="${blue}"/><path stroke="#111" d="M7 4c3 0 4 1 4 4M9 8h4l-2 2z"/>`,
    erase: `<path stroke="#c8a060" stroke-width="3.500" d="M16 2 8 11"/><path fill="#c8481c" d="M9 8l3 3-3 3H5z"/><path stroke="#111" d="M1.500 16.500h15"/>`,
    copyobj: `<circle cx="5" cy="5" r="3" stroke="#333" fill="#fff"/><circle cx="11" cy="12" r="3.500" fill="#fff" stroke="${blue}"/><circle cx="13" cy="14" r="3.500" fill="#fff" stroke="${blue}"/><path stroke="#111" d="M10 4c3 0 5 0 5 4M13 7l2 2 2-2"/>`,
    mirror: `<path fill="#fff" stroke="#333" d="M7 3v13H2z"/><path fill="#cfe6f6" stroke="${blue}" d="M11 3v13h5z"/><path stroke="#111" d="M9 1v16"/>`,
    offset: `<path fill="#fff" stroke="#222" d="M2 14c0-4 3-3 4-5 0-3 1-6 4-6s3 3 3 5c1 1 3 1 3 3v4z"/><path fill="none" stroke="${blue}" stroke-width="1.400" d="M2 16h15M5 12c2 0 3-1 4-3"/>`,
    array: `<g stroke="#333"><path d="M2 2h6v6H2z"/></g><g stroke="${blue}"><path d="M10 2h6v6h-6zM2 10h6v6H2zM10 10h6v6h-6z"/></g><path fill="#111" d="M17 12v5h-5z"/>`,
    move: '<rect x="7" y="7" width="4" height="4" fill="#fff" stroke="#333"/><path fill="#222" d="M9 1l2.500 3h-5zM9 17l2.500-3h-5zM1 9l3-2.500v5zM17 9l-3-2.500v5z"/>',
    rotate: '<path stroke="#444" stroke-width="1.300" d="M12 3.500a7 7 0 1 1-6 0"/><path fill="#222" d="M5 .5l2 3.500-4 1z"/>',
    scale: `<path fill="#9fd0ee" stroke="${blue}" d="M2 2h14v14H8V8H2z"/><path fill="#fff" stroke="#333" d="M2 9h7v7H2z"/>`,
    stretch: `<path fill="#fff" stroke="#333" d="M2 2h8v14H2z"/><path fill="#cfe6f6" stroke="${blue}" d="M10 2h3l3 14h-6z"/><path stroke="#111" stroke-width="1.300" d="M5 12h7M10 10l3 2-3 2"/>`,
    trim: `<path stroke="#222" stroke-dasharray="4 2" d="M2 9h14"/><path stroke="${blue}" stroke-width="1.300" d="M11 2 6 16"/>`,
    extend: `<path stroke="#222" stroke-dasharray="3 2" d="M1 9h9"/><path stroke="${blue}" stroke-width="1.300" d="M16 2l-4 14"/>`,
    breakp: `<path fill="#fff" stroke="#333" d="M2 6h14v9H2z"/><rect x="10" y="3.500" width="4" height="4" fill="${blue}"/>`,
    breakl: `<path fill="#fff" stroke="#333" d="M2 6h14v9H2z"/><rect x="4" y="3.500" width="4" height="4" fill="${blue}"/><rect x="11" y="3.500" width="4" height="4" fill="${blue}"/>`,
    join: `<path stroke="${blue}" stroke-width="1.300" d="M1 9h16"/><path fill="${blue}" d="M4 6l4 3-4 3zM14 6l-4 3 4 3z"/>`,
    chamfer: `<path fill="#fff" stroke="#333" d="M2 16V9l8-7h6v14z"/>`,
    fillet: `<path fill="#fff" stroke="#333" d="M2 16V10c0-5 3-8 8-8h6v14z"/><path stroke="${blue}" d="M2 11c0-5 3-9 8-9"/>`,
    blend: `<path stroke="${blue}" stroke-width="1.300" d="M3 12c2-6 4 3 7 1s3-7 5-7"/><path stroke="#333" d="M1 16l2-4M15 6l2-4"/><path fill="#fff" stroke="#333" d="M2 11h3v3H2zM14 4h3v3h-3z"/>`,
    explode: `<path fill="#cfe6f6" stroke="${blue}" d="M2 9l3-4h10v7l-3 4H2z M2 9h10v7M12 9l3-4M6 5v7l-4 4M6 12h9"/>`,
    dfront: stack('#8a949e'), dback: stack('#fff').replace('#fff', '#8a949e'), dabove: '<rect x="2.500" y="2.500" width="12" height="8" fill="#fff" stroke="#333"/><rect x="5.500" y="7" width="11" height="8" fill="#a0a6ac" stroke="#333"/>',
    dunder: '<rect x="5.500" y="7" width="11" height="8" fill="#a0a6ac" stroke="#333"/><rect x="2.500" y="2.500" width="12" height="8" fill="#fff" stroke="#333"/>',
    abc: '<text x="9" y="8" font-size="7" font-weight="700" font-family="Liberation Sans" text-anchor="middle" fill="#222" stroke="none">ABC</text><path stroke="#333" d="M3 10v6h10V10"/><path fill="#111" d="M17 12v5h-5z"/>',
    texthatch: '<rect x="2" y="2" width="13" height="9" fill="#a0a6ac" stroke="#333"/><path stroke="#333" stroke-dasharray="1 1" d="M3 15h13M16 6v10"/><text x="9" y="16" font-size="7" font-family="Liberation Sans" text-anchor="middle" fill="#222" stroke="none">AB</text>',
    dlin: dim(), dali: '<path stroke="#333" d="M1 7l4-4M9 17l4-4M3 5l8 10"/><path fill="#111" d="M3 5l3 1-2 2zM11 15l-3-1 2-2z"/>',
    darc: `<path stroke="#333" d="M2 14C3 7 8 4 14 3"/><path stroke="#777" stroke-width="3" d="M4 15c1-4 4-7 10-8" opacity=".5"/><rect x="1" y="14" width="3" height="3" fill="#fff" stroke="#333"/><rect x="14" y="2" width="3" height="3" fill="#fff" stroke="#333"/>`,
    dord: `<path stroke="#333" d="M5 16V9h9M5 16l10-9"/><g fill="#fff" stroke="${blue}"><circle cx="14" cy="3" r="1.500"/><circle cx="3" cy="6" r="1.500"/><circle cx="3" cy="12" r="1.500"/></g><circle cx="6" cy="3" r="1.500" fill="#fff" stroke="${blue}"/>`,
    drad: '<circle cx="9" cy="9" r="7" fill="#f0f0f0" stroke="#444"/><path stroke="#222" d="M9 9 5 4"/>',
    djog: '<path stroke="#333" d="M5 16 7 9l3 1 2-6"/><path stroke="#444" d="M12 3c3 1 5 6 3 10"/>',
    ddia: '<circle cx="9" cy="9" r="7" fill="#f0f0f0" stroke="#444"/><path stroke="#222" d="M4 4l10 10"/>',
    dang: '<path stroke="#333" d="M2 16h14M4 16 11 3"/><path stroke="#333" d="M8 9c3 1 5 4 5 7"/>',
    dquick: dim(`<path fill="${or}" d="M10 6 6 11h3l-1 5 4-6H9z"/>`),
    dbase: '<path stroke="#333" d="M2 3v14M9 7v10M16 11v6M2 6h7M2 10h14"/>',
    dcont: '<path stroke="#333" d="M2 4v12M7 4v12M12 4v12M16 4v12M2 8h14"/>',
    dspace: `<path stroke="#333" d="M2 2h14M2 16h14M9 2v14"/><rect x="6" y="5" width="6" height="8" fill="#f0c040" stroke="#333"/>`,
    dbreak: '<path stroke="#333" d="M1 8h6M11 8h6M9 2v7M6 16h6M9 12v4"/><path fill="#333" d="M14 5l3 3-3 3z"/>',
    tol: '<rect x="2" y="4" width="14" height="11" fill="#fff" stroke="#222"/><path stroke="#222" d="M10 4v11"/><text x="13" y="13" font-size="8" font-family="Liberation Sans" text-anchor="middle" fill="#111" stroke="none">1</text><circle cx="6" cy="9.500" r="2" fill="#111"/>',
    dcen: '<circle cx="9" cy="9" r="7" fill="#f0f0f0" stroke="#444"/><path stroke="#222" d="M6 9h6M9 6v6"/>',
    dinsp: `<path stroke="#333" d="M2 2v6M16 2v6M2 5h14"/><path stroke="#2a8a1a" stroke-width="2.500" d="M4 12l3 4 7-8"/>`,
    djogl: '<path stroke="#333" stroke-width="1.300" d="M1 9h4l3-6 3 12 2-6h4"/>',
    dedit: `<path stroke="#333" d="M1.500 16v-6M16 16v-6M1.500 13h15"/><path stroke="#e0a020" stroke-width="2.500" d="M14 2 8 9"/><path fill="#333" d="M8 8l2 2-3 1z"/>`,
    dtedit: '<path stroke="#333" d="M1.500 16v-6M16 16v-6M1.500 13h15"/><text x="9" y="11" font-size="12" font-family="Liberation Sans" text-anchor="middle" fill="#333" stroke="none">A</text>',
    dupd: `<path stroke="#333" d="M2 2v11M16 2v11M2 5h14"/><circle cx="9" cy="12" r="3.500" stroke="#2a8a1a" stroke-width="1.500" stroke-dasharray="4 1"/>`,
    wrench: '<path fill="#eee" d="M3 1l3 3-1 2 8 9c1 1 2 2 1 3s-2 0-3-1L3 8 1 8c-1-2-1-4 0-5l3 2 1-1z" stroke="#ccc" stroke-width=".4"/>',
    prompt: '<path stroke="#333" stroke-width="1.500" d="M3 4l5 5-5 5M9 14h6"/>',
    snapinf: `<path stroke="#222" stroke-width="1.300" d="M9 1v16M2 9h14"/><rect x="6" y="6" width="5" height="5" fill="#c8c8c8" stroke="#222"/><rect x="12" y="12" width="4" height="4" fill="#fff" stroke="${blue}"/>`,
    snap: '<path stroke="#333" stroke-dasharray="1 2" d="M3 3h12M3 6h12M3 9h12M3 12h12"/><path stroke="#333" d="M1 15h16"/>',
    grid: '<path fill="#fff" stroke="#333" d="M2 2h14v14H2z"/><path stroke="#333" d="M5.500 2v14M9 2v14M12.500 2v14M2 5.500h14M2 9h14M2 12.500h14"/>',
    ortho: '<path stroke="#222" stroke-width="1.300" d="M3 2v13h14"/>',
    polar: '<circle cx="10" cy="10" r="6" stroke="#444"/><path stroke="#222" stroke-width="1.300" d="M3 15h10L8 8"/><path stroke="#222" d="M15 4 3 15"/>',
    osnap3: `<path fill="#f4f4f4" stroke="#333" d="M3 3h12v14H3z"/><circle cx="3" cy="3" r="2.500" fill="#fff" stroke="#d04020" stroke-width="1.300"/>`,
    osnap: `<path fill="#f4f4f4" stroke="#333" d="M5 5l3-3h8v9l-3 3H5z M5 5h8v9M13 5l3-3"/><circle cx="3.500" cy="15" r="2.500" fill="#fff" stroke="#d04020" stroke-width="1.300"/>`,
    otrack: '<path stroke="#222" stroke-width="1.300" d="M3 16h13M3 16 14 5"/><path stroke="#222" d="M9 16c0-3-1-4-2-5"/>',
    ducs: `<path stroke="#222" stroke-width="1.300" d="M3 1v15h13M3 16 13 6"/><path fill="${or}" d="M13 1 9 8h3l-1 5 4-7h-3z"/>`,
    dyn: '<path stroke="#222" stroke-width="1.300" d="M3 4v9M0 8h7"/><rect x="8" y="9" width="8" height="4" fill="none" stroke="#222" stroke-width="1.300"/>',
    lwt: '<path stroke="#111" stroke-width="3" d="M9 2v14M2 9h14"/>',
    tpy: `<rect x="1" y="1" width="16" height="16" fill="#7cb4ea" stroke="#144"/><path fill="#fff" opacity=".4" d="M2 2h5v5H2zM7 7h5v5H7zM12 12h4v4h-4zM12 2h4v5h-4zM2 12h5v4H2z"/>`,
    qp: '<path fill="#fff" stroke="#111" stroke-width="1.400" d="M5 2h8v14H5z"/><path fill="#111" d="M7 4h4v3H7zM7 9h1.500v1.500H7zM9.500 9H11v1.500H9.500zM7 12h1.500v1.500H7zM9.500 12H11v1.500H9.500z"/>',
    sc: `<path stroke="#222" stroke-width="1.300" d="M1 4h7M4 1v6M4 7v8h4"/><rect x="8" y="8" width="8" height="9" fill="#5aa040" stroke="#264"/>`,
    am: '<path fill="#eee" stroke="#222" stroke-width="1.500" d="M6 1.500h6V6h4.500v6H12v4.500H6V12H1.500V6H6z"/>',
    stmodel: '<path fill="#ddd" stroke="#111" d="M2 2h14v10H2z"/><path fill="#555" d="M7 3.500 11 10H7z"/><path stroke="#111" stroke-width="2" d="M1 15h16"/>',
    stlay: '<path fill="#eee" stroke="#111" d="M2 2h6.500v9H2zM9.500 2H16v9H9.500z"/><path stroke="#111" stroke-width="2" d="M1 15h16"/>',
    scl: `<path fill="#eee" stroke="#222" d="M9 1l2 6 6 9-8-4-8 4 6-9z"/>`,
    scl2: `<path fill="#eee" stroke="#222" d="M7 1l2 6 5 9-7-4-6 4 5-9z"/><circle cx="13" cy="10" r="3" fill="#f0b020" stroke="#fff"/>`,
    scl3: '<path fill="#999" stroke="#666" d="M9 1l2 6 6 9-8-4-8 4 6-9z"/><path stroke="#666" d="M4 4l10 10"/>',
    stgear: '<circle cx="9" cy="9" r="6" fill="#ddd" stroke="#222" stroke-width="3" stroke-dasharray="3 1.500"/><circle cx="9" cy="9" r="5" fill="none" stroke="#222"/><circle cx="9" cy="9" r="2.500" fill="#999" stroke="#222"/>',
    lock: '<path fill="#e8e8e8" stroke="#222" d="M1.500 8h10v9h-10z"/><path stroke="#222" stroke-width="1.500" d="M9 8V4c0-4 7-4 7 0v3"/><path stroke="#222" d="M6.500 10v5"/>',
    hw: `<path fill="#666" stroke="#222" d="M2 4h12v8H2z"/><path stroke="#222" d="M4 1v3M8 1v3M12 1v3M4 12v3M8 12v3"/><path fill="${blue}" d="M13 7l3 4-1 1v4h-3v-4l-1-1z"/>`,
    stbulb: bulb('#ffd95a'),
    window: '<path fill="#fff" stroke="#111" d="M2 1.500h14v15H2z"/><path fill="#555" d="M2 1.500h14V4H2z"/>',
    bino: '<path fill="#eee" stroke="#222" d="M3 3h4v3h4V3h4l1 11c0 3-6 3-6 0V9H8v5c0 3-6 3-6 0z"/>',
    user: '<circle cx="9" cy="5.500" r="4" fill="#eee" stroke="#222"/><path fill="#ddd" stroke="#222" d="M7 10c0 2-5 2-5 6h14c0-4-5-4-5-6z"/>',
    xchg: '<path fill="#2a4c96" d="M1 2h5l3 4 3-4h5l-5 7 5 7h-5l-3-4-3 4H1l5-7z"/>',
    key: `<rect x="8" y="8" width="9" height="9" fill="#e8801c" stroke="#a04c08"/><path fill="#fff" d="M11.500 9.500h2v3H15l-2.500 3-2.500-3h1.500z"/><circle cx="7" cy="4" r="2.500" stroke="#dde" stroke-width="1.500"/><path stroke="#dde" stroke-width="1.500" d="M6 6 2 14"/>`,
    helpc: '<circle cx="9" cy="9" r="7.500" fill="#fff" stroke="#333"/><text x="9" y="14" font-size="13" font-weight="700" font-family="Liberation Sans" text-anchor="middle" fill="#2450a8" stroke="none">?</text>',
    wmin: '<path fill="#fff" d="M4 11h10v3H4z"/>', wmax: '<path fill="#3f76ad" stroke="#fff" stroke-width="1.500" d="M7 3h8v8H7z"/><path fill="#3f76ad" stroke="#fff" stroke-width="1.500" d="M3 6h8v8H3z"/>',
    wx: '<path stroke="#fff" stroke-width="3" d="M3 3l12 11M15 3 3 14"/>',
    mmin: '<path fill="#111" d="M2 14h11v2H2z"/>', mmax: '<path stroke="#111" stroke-width="1.300" d="M6 3h9v8h-4M3 6h8v9H3z"/>', mx: '<path stroke="#111" stroke-width="2.500" d="M3 3l11 12M14 3 3 15"/>',
    sbulb1: bulb('#ffe56a'),
    ssun: '<circle cx="9" cy="9" r="4" fill="#fff2a0" stroke="#887"/><path stroke="#887" d="M9 1v3M9 14v3M1 9h3M14 9h3M3 3l2 2M13 13l2 2M15 3l-2 2M3 15l2-2"/>',
    sfrz: '<path fill="#ddd" stroke="#aaa" d="M2 3h9v9H2z"/><circle cx="12" cy="12" r="4" fill="#bbb" stroke="#999" stroke-dasharray="2 1"/>',
    slock: `<path stroke="${blue}" stroke-width="1.600" d="M8 8V5c0-4 6-4 6 0v2"/><path fill="#3a8ad0" stroke="#146" d="M2 8h10v9H2z"/>`
  };

  const svg = (n, sz = 18) => `<svg class="ico" width="${sz}" height="${sz}" viewBox="0 0 18 18" fill="none">${S[n] || ''}</svg>`;

  // toolbar items: icon name, | separator, ▾ / ▿ drop arrows, ‖ double bar, or objects for combos and gaps
  function item(it) {
    if (it === '|') return '<span class="sepv d-flex align-items-center justify-content-center"></span>';
    if (it === '▾') return '<span class="drop d-flex align-items-center justify-content-center"></span>';
    if (it === '▿') return '<span class="drop off d-flex align-items-center justify-content-center"></span>';
    if (it === '‖') return '<span class="dsep"></span>';
    if (it === '#') return '<span class="grip"></span>';
    if (typeof it === 'object') {
      if (it.gap) return `<span class="flex-shrink-0" style="width:${it.gap}px"></span>`;
      return `<span class="cmb d-flex align-items-center ${it.c || ''}" style="width:${it.w}px">${it.h}</span>`;
    }
    return `<span class="btnico d-flex align-items-center justify-content-center">${svg(it)}</span>`;
  }
  const tb = (list) => `<div class="tb d-flex align-items-center">${list.map(item).join('')}</div>`;
  const row = (groups) => `<div class="tbrow d-flex">${groups.map(tb).join('')}</div>`;
  const w = (s) => s.split(' ');

  document.getElementById('toolbars').innerHTML =
    row([
      ['#', ...w('new open save | print prev plot p3d | cut copy paste match blockedit | undo ▾ redo ▿ | pan zoomr zooms zoomp | prop dc tools sheet mkp calc | help')],
      ['#', 'tstyle', {gap: 2}, {w: 118, h: 'Standard', c: 'pad18'}, '‖', {gap: 1}, 'dstyle', {gap: 2}, {w: 118, h: 'ISO-25', c: 'pad18'}, '‖', {gap: 1}, 'tbstyle', {gap: 1}, {w: 119, h: 'Standard', c: 'left'}, '‖', {gap: 1}, 'mlstyle', {gap: 1}, {w: 118, h: 'Standard', c: 'pad18'}]
    ]) +
    row([
      ['#', {gap: 2}, {w: 173, h: 'AutoCAD 经典'}, 'gear', 'wsmax'],
      ['#', 'layerp', {gap: 1}, {w: 298, c: 'left', h: `${svg('sbulb1', 15)}${svg('ssun', 15)}${svg('sfrz', 15)}${svg('slock', 15)}<span class="swatchb d-block"></span>0`}, 'layerstate', 'layerm', 'layers0', {gap: 13},
       {w: 147, c: 'left', h: '<span class="swatch d-block"></span><span class="slab">ByLayer</span>'}, '‖', {gap: 2}, {w: 158, h: '<span class="lineline d-block"></span><span class="slab">ByLayer</span>'}, '‖', {gap: 2}, {w: 123, h: '<span class="lineshort d-block"></span><span class="slab">ByLayer</span>'}, '‖', {gap: 2}, {w: 118, c: 'off', h: '<span class="slab">BYCOLOR</span>'}]
    ]) +
    row([
      ['#', ...w('polysolid box wedge cone sphere cyl torus pyr helix planar | extrude press sweep revolve loft | union subtract intersect | gizmo orbit align3 array3')],
      ['#', ...w('union subtract intersect | fext fmove foff fdel frot ftap fcopy fcolor | eround echam ecopy ecolor | imprint clean sep3 shell check3')],
      ['#', ...w('slice | hide hide2 ballB ballG | vsm')]
    ]) +
    row([
      ['#', ...w('vmgr | vw1 vw2 vw3 vw4 vw5 vw6 | iso1 iso2 iso3 iso4 | vcam | vback'), {w: 140, c: 'off', h: ''}]
    ]);

  const vlist = (id, names) => {
    document.getElementById(id).innerHTML = '<div class="vgrip"></div>' + names.map((n) =>
      n === '-' ? '<div class="vsep"></div>' : `<div class="btnico d-flex align-items-center justify-content-center">${svg(n)}</div>`).join('');
  };
  vlist('tbLeft', w('line xline pline polygon rect arc circle cloud spline ellipse ellarc insert mkblock point hatch gradient region table mtext addsel'));
  vlist('tbRight1', w('erase copyobj mirror offset array move rotate scale stretch trim extend breakp breakl join chamfer fillet blend explode'));
  vlist('tbRight2', w('dfront dback dabove dunder - abc texthatch'));

  document.getElementById('tbDim').innerHTML = ['#', ...w('dlin dali darc dord | drad djog ddia dang | dquick dbase dcont dspace dbreak | tol dcen dinsp djogl | dedit dtedit dupd |'), {gap: 2}, {w: 118, h: 'ISO-25', c: 'pad18'}, 'dstyle'].map(item).join('');

  // title bar, pieces in screen order
  const tcell = (n) => `<span class="tcell d-flex align-items-center justify-content-center">${svg(n)}</span>`;
  const tdrop = '<span class="tarrow dim d-flex align-items-center justify-content-center"></span>';
  document.getElementById('titlebar').innerHTML =
    tcell('new') + tcell('open') + tcell('save') + tcell('saveas') + tcell('pub') + tdrop.replace('tarrow', 'tarrow nar') +
    tcell('print') + tcell('undo') + tdrop + tcell('redo') + tdrop +
    `<div class="tcombo d-flex align-items-center">${svg('gear', 16)}&nbsp;AutoCAD 经典</div>` +
    '<div class="tmore d-flex align-items-center justify-content-center"></div>' +
    '<div class="aero d-flex align-items-center"><span>AutoCAD 2013</span><span>Drawing1.dwg</span></div>' +
    '<div class="tplay d-flex align-items-center justify-content-center"></div>' +
    '<div class="search d-flex align-items-center">键入关键字或短语</div>' +
    `<div class="infobar">
       <span class="inf1">${svg('bino')}</span><span class="inf2">${svg('user')}</span><span class="inf3">登录</span>
       <span class="inf4 tarrow dim d-flex align-items-center justify-content-center"></span><span class="inf5">${svg('xchg')}</span>
       <span class="inf6">${svg('key')}</span><span class="inf7 tarrow dim d-flex align-items-center justify-content-center"></span>
       <span class="inf8">${svg('helpc')}</span><span class="inf9 tarrow dim d-flex align-items-center justify-content-center"></span>
     </div>` +
    `<div class="winbg"><div class="winbtns d-flex">
       <div class="w1 d-flex align-items-center justify-content-center">${svg('wmin', 15)}</div>
       <div class="w2 d-flex align-items-center justify-content-center">${svg('wmax', 15)}</div>
       <div class="w3 d-flex align-items-center justify-content-center">${svg('wx', 15)}</div>
     </div></div>`;

  const infoX = [4, 28, 50, 129, 148, 172, 188, 218, 236];
  infoX.forEach((x, i) => {
    const el = document.querySelector('.inf' + (i + 1));
    el.style.left = x + 'px';
    if (el.classList.contains('tarrow')) el.style.top = '0';
  });

  const menus = [['文件', 'F'], ['编辑', 'E'], ['视图', 'V'], ['插入', 'I'], ['格式', 'O'], ['工具', 'T'], ['绘图', 'D'], ['标注', 'N'], ['修改', 'M'], ['参数', 'P'], ['窗口', 'W'], ['帮助', 'H']];
  document.getElementById('menubar').innerHTML = menus.map(([a, b]) => `<span>${a}(<u>${b}</u>)</span>`).join('') +
    `<span class="menuctl d-flex">${svg('mmin', 15)}${svg('mmax', 15)}${svg('mx', 15)}</span>`;

  document.getElementById('wrench').innerHTML = svg('wrench', 16);
  document.getElementById('promptIco').innerHTML = svg('prompt', 12);

  const stActive = new Set(['ortho', 'osnap3', 'osnap', 'otrack', 'ducs']);
  const st = (n) => `<span class="stbtn ${stActive.has(n) ? 'act' : ''} d-flex align-items-center justify-content-center">${svg(n, 17)}</span>`;
  document.getElementById('status').innerHTML =
    '<span class="coords">5272.3763, -823.9585, 0.0000</span>' +
    w('snapinf snap grid ortho polar osnap3 osnap otrack ducs dyn lwt tpy qp sc am').map(st).join('') +
    '<span class="stend"></span>' +
    '<span class="stright d-flex">' +
      '<span class="stmodel d-flex align-items-center justify-content-center">模型</span>' + st('stmodel') + st('stlay') +
      '<span class="stgap"></span>' +
      `<span class="stscale d-flex align-items-center justify-content-center gap-1">${svg('scl', 16)}1:1</span>` + st('scl2') + st('scl3') +
      '<span class="stgap nar"></span>' + st('stgear') + st('lock') + st('hw') +
      `<span class="stbtn stbulb d-flex align-items-center justify-content-center">${svg('stbulb', 18)}</span>` +
      '<span class="stdrop d-flex align-items-center justify-content-center"></span>' + st('window') +
    '</span>';

  // bowl outline, points read off the picture
  function smooth(p, closed) {
    let d = `M${p[0][0]} ${p[0][1]}`;
    const n = p.length;
    for (let i = 0; i < (closed ? n : n - 1); i++) {
      const a = p[closed ? (i - 1 + n) % n : Math.max(i - 1, 0)], b = p[i], c = p[(i + 1) % n], e = p[closed ? (i + 2) % n : Math.min(i + 2, n - 1)];
      d += `C${b[0] + (c[0] - a[0]) / 6} ${b[1] + (c[1] - a[1]) / 6} ${c[0] - (e[0] - b[0]) / 6} ${c[1] - (e[1] - b[1]) / 6} ${c[0]} ${c[1]}`;
    }
    return d;
  }
  const topEdge = [[40,690],[60,600],[130,535],[250,490],[400,445],[500,405],[580,350],[650,265],[710,190],[760,135],[820,108],[900,102],[1100,112],[1240,112],[1330,85],[1415,30]];
  const rim = [[1460,135],[1420,180],[1400,240],[1400,300],[1418,430],[1418,490],[1400,540],[1340,585],[1240,625],[1120,675],[1040,715],[980,780],[945,825],[900,900],[850,975],[800,1035],[730,1075],[650,1090],[560,1090],[450,1075],[300,1040],[160,1002]];
  const leftIn = [[160,1002],[110,900],[60,790],[40,690]];
  const innerD = smooth(topEdge) + 'L1425 80L1460 135' + smooth(rim).replace(/^M[^C]*/, '') + smooth(leftIn).replace(/^M[^C]*/, '') + 'Z';
  const shell = [[40,700],[50,820],[90,970],[150,1095],[220,1195],[300,1275],[400,1340],[500,1370],[600,1355],[680,1325],[740,1270],[820,1150],[880,1040],[925,965],[985,905],[1100,870],[1230,830],[1300,790],[1350,730],[1395,630],[1415,520]];
  const shellD = smooth(shell) + 'L1400 540' + smooth(rim.slice(6)).replace(/^M[^C]*/, '') + 'Z';
  document.getElementById('pInner').setAttribute('d', innerD);
  document.getElementById('pInner2').setAttribute('d', innerD);
  document.getElementById('pShell').setAttribute('d', shellD);
  document.getElementById('pFlap').setAttribute('d', 'M1460 135L1520 100L1515 125L1445 175L1412 225L1400 250L1420 180Z');
  document.getElementById('pRim1').setAttribute('d', 'M1520 100L1460 137' + smooth(rim.slice(1, 12)).replace(/^M/, 'L'));
  document.getElementById('pRim2').setAttribute('d', smooth(rim.slice(12)));
</script>
<script src="https://cdn.jsdelivr.net/npm/bootstrap@5.3.0/dist/js/bootstrap.bundle.min.js"></script>
</body>
</html>
